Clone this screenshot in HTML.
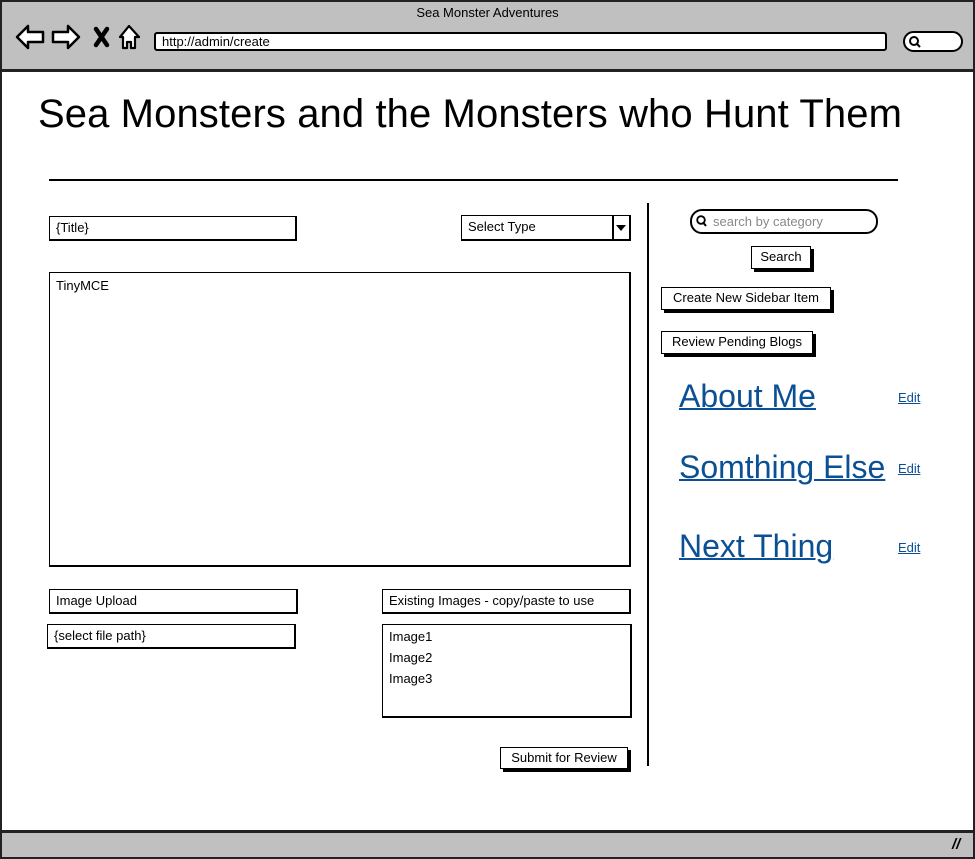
<!DOCTYPE html>
<html><head><meta charset="utf-8">
<style>
*{box-sizing:border-box;margin:0;padding:0}
body{width:975px;height:859px;position:relative;background:#fff;font-family:"Liberation Sans",sans-serif;color:#000;overflow:hidden}
.a{position:absolute}
.inp{position:absolute;background:#fff;border:1.5px solid #000;border-right-width:2.5px;border-bottom-width:2.5px;font-size:13px;padding:4px 6px 3px;line-height:14px;white-space:nowrap}
.btn{position:absolute;background:#fff;border:1.5px solid #000;box-shadow:3px 3px 0 #000;font-size:13px;line-height:16px;text-align:center;white-space:nowrap}
.lnk{position:absolute;color:#0b4f94;text-decoration:underline;text-decoration-thickness:2px;white-space:nowrap}
</style></head><body>
<div class="a" style="left:0;top:0;width:975px;height:859px;border:2px solid #222;background:#fff"></div>
<div class="a" style="left:0;top:0;width:975px;height:72px;background:#c0c0c0;border:2px solid #222;border-bottom:3px solid #222"></div>
<div class="a" style="left:0;top:6px;width:975px;text-align:center;font-size:13px;line-height:14px">Sea Monster Adventures</div>
<svg class="a" style="left:14px;top:22px" width="130" height="30" viewBox="0 0 130 30">
<path d="M3 15 L14 4 L14 10 L29 10 L29 20 L14 20 L14 26 Z" fill="#fff" stroke="#000" stroke-width="2.5" stroke-linejoin="round"/>
<path d="M65 15 L54 4 L54 10 L39 10 L39 20 L54 20 L54 26 Z" fill="#fff" stroke="#000" stroke-width="2.5" stroke-linejoin="round"/>
<path d="M82 7 L93 23 M93 7 L82 23" stroke="#000" stroke-width="4.5" stroke-linecap="round"/>
<path d="M106 15 L115 4 L125 15 L121 15 L121 26 L117 26 L117 20 L113 20 L113 26 L109 26 L109 15 Z" fill="#fff" stroke="#000" stroke-width="2.2" stroke-linejoin="round"/>
</svg>
<div class="a" style="left:154px;top:32px;width:733px;height:19px;background:#fff;border:2px solid #000;border-radius:3px;font-size:13px;line-height:15px;padding-left:6px">http://admin/create</div>
<div class="a" style="left:903px;top:31px;width:60px;height:21px;background:#fff;border:2.5px solid #000;border-radius:11px"></div>
<svg class="a" style="left:908px;top:35px" width="14" height="14"><circle cx="6" cy="6" r="4" fill="none" stroke="#000" stroke-width="2"/><path d="M9 9 L12 12" stroke="#000" stroke-width="2"/></svg>
<div class="a" style="left:0;top:830px;width:975px;height:29px;background:#c0c0c0;border:2px solid #222;border-top:3px solid #222"></div>
<div class="a" style="left:952px;top:836px;font-size:15px;font-weight:bold;font-style:italic">//</div>

<div class="a" style="left:38px;top:92px;font-size:40px;line-height:44px;letter-spacing:0.1px;white-space:nowrap">Sea Monsters and the Monsters who Hunt Them</div>
<div class="a" style="left:49px;top:179px;width:849px;height:2px;background:#000"></div>
<div class="a" style="left:647px;top:203px;width:2px;height:563px;background:#000"></div>

<div class="inp" style="left:49px;top:216px;width:248px;height:25px">{Title}</div>
<div class="inp" style="left:461px;top:215px;width:170px;height:26px">Select Type</div>
<div class="a" style="left:612px;top:216px;width:1.5px;height:24px;background:#000"></div>
<svg class="a" style="left:615px;top:224px" width="12" height="8"><path d="M1 1 L11 1 L6 7 Z" fill="#000"/></svg>

<div class="inp" style="left:49px;top:272px;width:582px;height:295px;padding-top:6px">TinyMCE</div>

<div class="inp" style="left:49px;top:589px;width:249px;height:25px">Image Upload</div>
<div class="inp" style="left:47px;top:624px;width:249px;height:25px">{select file path}</div>
<div class="inp" style="left:382px;top:589px;width:249px;height:25px">Existing Images - copy/paste to use</div>
<div class="inp" style="left:382px;top:624px;width:250px;height:94px;line-height:21px;padding-top:1px">Image1<br>Image2<br>Image3</div>
<div class="btn" style="left:500px;top:747px;width:128px;height:22px;padding-top:2px">Submit for Review</div>

<div class="a" style="left:690px;top:209px;width:188px;height:25px;border:2px solid #000;border-radius:12px;background:#fff;font-size:13px;color:#888;padding:3px 0 0 21px">search by category</div>
<svg class="a" style="left:696px;top:215px" width="12" height="13"><circle cx="5" cy="5" r="3.8" fill="none" stroke="#000" stroke-width="1.8"/><path d="M7.5 8 L10 11" stroke="#000" stroke-width="2"/></svg>
<div class="btn" style="left:751px;top:246px;width:60px;height:23px;padding-top:2px">Search</div>
<div class="btn" style="left:661px;top:287px;width:170px;height:23px;padding-top:2px">Create New Sidebar Item</div>
<div class="btn" style="left:661px;top:331px;width:152px;height:23px;padding-top:2px">Review Pending Blogs</div>

<div class="lnk" style="left:679px;top:378px;font-size:32px;line-height:36px">About Me</div>
<div class="lnk" style="left:679px;top:449px;font-size:32px;line-height:36px">Somthing Else</div>
<div class="lnk" style="left:679px;top:528px;font-size:32px;line-height:36px">Next Thing</div>
<div class="lnk" style="left:898px;top:390px;font-size:13px;text-decoration-thickness:1px">Edit</div>
<div class="lnk" style="left:898px;top:461px;font-size:13px;text-decoration-thickness:1px">Edit</div>
<div class="lnk" style="left:898px;top:540px;font-size:13px;text-decoration-thickness:1px">Edit</div>
</body></html>
